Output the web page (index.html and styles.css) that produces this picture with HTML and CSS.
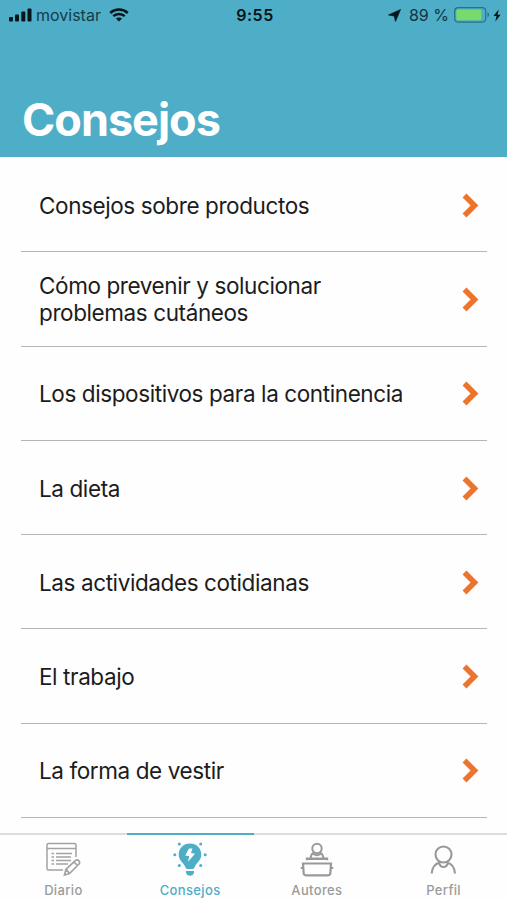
FILE: index.html
```html
<!DOCTYPE html>
<html lang="es">
<head>
    <meta charset="UTF-8">
    <meta name="viewport" content="width=device-width, initial-scale=1.0">
    <title>Consejos</title>
    <link rel="stylesheet" href="styles.css">
</head>
<body>
    <header class="header">
        <div class="status-bar">
            <div class="status-left">
                <svg class="signal" width="23" height="14" viewBox="0 0 23 14">
                    <rect x="0" y="9" width="4" height="4.5" rx="1"/>
                    <rect x="6" y="6.5" width="4" height="7" rx="1"/>
                    <rect x="12.3" y="3.5" width="4" height="10" rx="1"/>
                    <rect x="18.5" y="0.5" width="4" height="13" rx="1"/>
                </svg>
                <span class="carrier">movistar</span>
                <svg class="wifi" width="20" height="14" viewBox="0 0 20 14">
                    <path d="M1.2 5C6.2 .4 13.8 .4 18.8 5M4.3 8.2c3.2-3 8.2-3 11.4 0" fill="none" stroke="#06151a" stroke-width="2.4"/>
                    <path d="M6.9 10.6c1.8-1.6 4.4-1.6 6.2 0L10 13.6z"/>
                </svg>
            </div>
            <span class="time">9:55</span>
            <div class="status-right">
                <svg class="location" width="13" height="13" viewBox="0 0 13 13">
                    <path d="M12.5 .5 7.5 12.4 6.2 7 .5 6z" stroke="#06151a" stroke-width=".7"/>
                </svg>
                <span class="percent">89 %</span>
                <svg class="battery" width="36" height="16" viewBox="0 0 36 16">
                    <rect x=".7" y=".7" width="31" height="14.4" rx="3.5" fill="none" stroke="#2b7185" stroke-width="1.2"/>
                    <rect x="2.4" y="2.5" width="25" height="10.8" rx="1.5" fill="#77da6b"/>
                    <path d="M33.5 5.3c2 .8 2 4.2 0 5z" fill="#2b7185"/>
                </svg>
                <svg class="bolt" width="8" height="13" viewBox="0 0 8 13">
                    <path d="M5.7 .4 .5 7h3L2.3 12.6 7.6 5.8H4.5z"/>
                </svg>
            </div>
        </div>
        <h1>Consejos</h1>
    </header>

    <main class="list">
        <a class="item"><span>Consejos sobre productos</span><svg class="arrow" viewBox="0 0 17 25"><path d="M2.5 2.5 12.500 12.500 2.500 22.500"/></svg></a>
        <a class="item"><span>Cómo prevenir y solucionar<br>problemas cutáneos</span><svg class="arrow" viewBox="0 0 17 25"><path d="M2.5 2.5 12.500 12.500 2.500 22.500"/></svg></a>
        <a class="item"><span>Los dispositivos para la continencia</span><svg class="arrow" viewBox="0 0 17 25"><path d="M2.5 2.5 12.500 12.500 2.500 22.500"/></svg></a>
        <a class="item"><span>La dieta</span><svg class="arrow" viewBox="0 0 17 25"><path d="M2.5 2.5 12.500 12.500 2.500 22.500"/></svg></a>
        <a class="item"><span>Las actividades cotidianas</span><svg class="arrow" viewBox="0 0 17 25"><path d="M2.5 2.5 12.500 12.500 2.500 22.500"/></svg></a>
        <a class="item"><span>El trabajo</span><svg class="arrow" viewBox="0 0 17 25"><path d="M2.5 2.5 12.500 12.500 2.500 22.500"/></svg></a>
        <a class="item"><span>La forma de vestir</span><svg class="arrow" viewBox="0 0 17 25"><path d="M2.5 2.5 12.500 12.500 2.500 22.500"/></svg></a>
    </main>

    <nav class="tab-bar">
        <a class="tab">
            <svg width="36" height="36" viewBox="0 0 36 36" fill="none" stroke="#a3a3a3" stroke-width="1.5">
                <path d="M18 29H3.500Q2 29 2 27.500V4Q2 2.500 3.500 2.500H29.500Q31 2.500 31 4V16M2 7.500H31"/>
                <path d="M6.500 12.500h2.500M6.500 16h2.500M6.500 19.500h2.500M6.500 23h2.500M11 12.500h16M11 16h15M11 19.500h15M11 23h12"/>
                <path d="M19.500 34 21 28.300 30.500 19.500Q32.200 18.200 33.800 19.700Q35.300 21.300 34 23L24.500 32.500ZM29 21l3.500 3.500M21 28.300l3.500 4.200" stroke-width="1.700"/>
            </svg>
            <span>Diario</span>
        </a>
        <a class="tab active">
            <svg width="36" height="36" viewBox="0 0 36 36" fill="#4eadc7">
                <path d="M18 2.500C11.500 2.500 6.700 7.300 6.700 13.500C6.700 19 10.500 21 12.800 25Q14 28 15 28H21Q22 28 23.200 25C25.500 21 29.300 19 29.300 13.500C29.300 7.300 24.500 2.500 18 2.500Z"/>
                <path d="M14 30h8v1.500q-1 3.300-4 3.300t-4-3.300z"/>
                <circle cx="7.300" cy="3" r="1.500"/><circle cx="28.700" cy="3" r="1.500"/>
                <circle cx="2.800" cy="13.700" r="1.500"/><circle cx="33.200" cy="13.700" r="1.500"/>
                <circle cx="7.300" cy="24.500" r="1.500"/><circle cx="28.700" cy="24.500" r="1.500"/>
                <path d="M17 7.500 13.200 14.500l4 .8L16 20.800 23 12.700l-4-.7 1.500-4.500z" fill="#fff"/>
            </svg>
            <span>Consejos</span>
        </a>
        <a class="tab">
            <svg width="36" height="36" viewBox="0 0 36 36" fill="none" stroke="#999" stroke-width="2">
                <circle cx="18" cy="7.500" r="4.700"/>
                <path d="M11.500 17.500C12 13.800 14 11.800 15.500 11.500M24.500 17.500C24 13.800 22 11.800 20.500 11.500M14.500 13q3.500 2.500 7 0"/>
                <path d="M8 19.200V17.700H28V19.200" stroke-width="2.400"/>
                <path d="M4 22.500H32L31.300 32.500Q31.100 34.300 29 34.300H7Q4.900 34.300 4.700 32.500ZM1.700 27H4.500M31.500 27h2.800" stroke-width="2.200"/>
            </svg>
            <span>Autores</span>
        </a>
        <a class="tab">
            <svg width="36" height="36" viewBox="0 0 36 36" fill="none" stroke="#999" stroke-width="2.100">
                <circle cx="17.500" cy="13.500" r="8"/>
                <path d="M5.700 32.500C6.200 27 9 22.500 14 21.500M29 32.500C28.500 27 25.700 22.500 21 21.500M13 21.500q1 4.500 4.500 4.500t4.500-4.500"/>
            </svg>
            <span>Perfil</span>
        </a>
    </nav>
</body>
</html>
```
FILE: styles.css
```css
* {
    box-sizing: border-box;
}

body {
    margin: 0;
    height: 900px;
    display: flex;
    flex-direction: column;
    overflow: hidden;
    font-family: Inter, "Liberation Sans", sans-serif;
    background-color: #fefefe;
    color: #1c1c1c;
}

svg {
    display: block;
    flex-shrink: 0;
}

.header {
    height: 157px;
    flex-shrink: 0;
    background-color: #4eadc7;
}

.status-bar {
    display: grid;
    grid-template-columns: 1fr auto 1fr;
    align-items: center;
    height: 30px;
    padding: 0 6px 0 9px;
    font-size: 16px;
    color: #06151a;
    fill: #06151a;
}

.status-left,
.status-right {
    display: flex;
    align-items: center;
}

.status-right {
    justify-content: flex-end;
}

.carrier {
    width: 65px;
    margin: 0 8px 0 4px;
    color: #173c48;
}

.time {
    font-weight: 600;
    letter-spacing: 0.5px;
}

.percent {
    margin: 0 5px 0 8px;
    color: #123440;
    white-space: nowrap;
}

.bolt {
    margin-left: 3px;
}

h1 {
    margin: 62px 0 0 22px;
    font-size: 45px;
    line-height: 56px;
    font-weight: 700;
    letter-spacing: -1px;
    color: #fff;
}

.list {
    flex: 1;
    min-height: 0;
    padding: 1px 20px 0 21px;
    overflow: hidden;
}

.item {
    display: flex;
    align-items: center;
    justify-content: space-between;
    height: 94.3px;
    padding: 1px 8px 0 18px;
    border-bottom: 1.5px solid #b5b5b5;
    font-size: 22.5px;
    line-height: 27px;
    letter-spacing: -0.4px;
}

.arrow {
    width: 17px;
    height: 25px;
    fill: none;
    stroke: #ec742c;
    stroke-width: 5.5;
}

.tab-bar {
    display: grid;
    grid-template-columns: repeat(4, 1fr);
    height: 67px;
    flex-shrink: 0;
}

.tab {
    display: flex;
    flex-direction: column;
    align-items: center;
    padding-top: 6px;
    border-top: 2px solid #dcdede;
    font-size: 13px;
    line-height: 16px;
    font-weight: 500;
    letter-spacing: 0.35px;
    color: #9b9b9b;
}

.tab span {
    margin-top: 5px;
}

.tab.active {
    border-top-color: #4eadc7;
    color: #4eadc7;
}
```
